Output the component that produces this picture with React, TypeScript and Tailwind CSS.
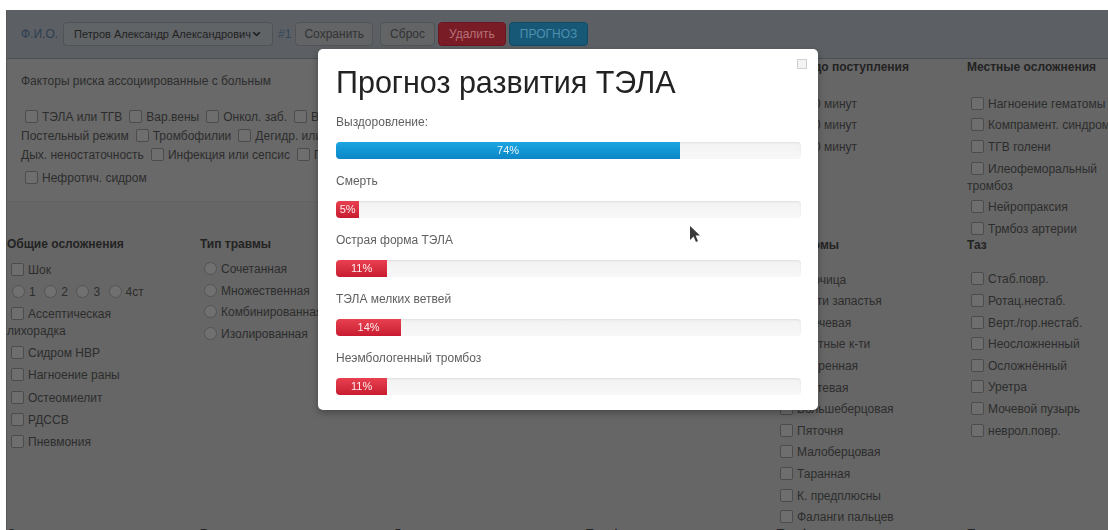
import { ChevronDown } from 'lucide-react';

type Bar = { label: string; value: number; tone: 'info' | 'danger' };

const PROGNOZ: Bar[] = [
  { label: 'Выздоровление:', value: 74, tone: 'info' },
  { label: 'Смерть', value: 5, tone: 'danger' },
  { label: 'Острая форма ТЭЛА', value: 11, tone: 'danger' },
  { label: 'ТЭЛА мелких ветвей', value: 14, tone: 'danger' },
  { label: 'Неэмбологенный тромбоз', value: 11, tone: 'danger' },
];

const OBSHIE = ['Сидром НВР', 'Нагноение раны', 'Остеомиелит', 'РДССВ', 'Пневмония'];
const TIP_TRAVMY = ['Сочетанная', 'Множественная', 'Комбинированная', 'Изолированная'];
const MEHANIZM = ['ДТП', 'Падение с высоты', 'Бытовая', 'Спортивная'];
const LOKALIZ = ['Верхняя конечность', 'Нижняя конечность', 'Позвоночник'];
const VREMYA = ['< 30 минут', '< 60 минут', '> 60 минут'];
const PERELOMY = [
  'Ключица', 'Кости запастья', 'Плечевая', 'Пястные к-ти', 'Бедренная', 'Локтевая',
  'Большеберцовая', 'Пяточня', 'Малоберцовая', 'Таранная', 'К. предплюсны', 'Фаланги пальцев',
];
const MESTNYE = ['Нагноение гематомы', 'Компрамент. синдром', 'ТГВ голени', 'Илеофеморальный тромбоз', 'Нейропраксия', 'Трмбоз артерии'];
const TAZ = ['Стаб.повр.', 'Ротац.нестаб.', 'Верт./гор.нестаб.', 'Неосложненный', 'Осложнённый', 'Уретра', 'Мочевой пузырь', 'неврол.повр.'];

function Box() {
  return <span className="inline-block w-[13px] h-[13px] ml-[4px] mr-[4px] align-[-2px] rounded-[2px] border border-[#4c4c4c] bg-[#6e6e6e]" />;
}

function Dot() {
  return <span className="inline-block w-[13px] h-[13px] ml-[4px] mr-[4px] align-[-2px] rounded-full border border-[#555555] bg-[#707070]" />;
}

function Check({ label, radio, tall }: { label: string; radio?: boolean; tall?: boolean }) {
  return (
    <div className={`${tall ? 'py-[2.6px]' : 'py-[2.3px]'} leading-[17px]`}>
      {radio ? <Dot /> : <Box />}{label}
    </div>
  );
}

function Heading({ children, className = '' }: { children: React.ReactNode; className?: string }) {
  return <h5 className={`font-bold text-[12px] leading-[17px] text-[#232323] whitespace-nowrap ${className}`}>{children}</h5>;
}

function Factor({ label }: { label: string }) {
  return <span className="mr-[3px]"><Box />{label}</span>;
}

export default function App() {
  return (
    <div className="relative h-screen overflow-hidden bg-white pt-[10px] pl-[6px] font-['Liberation_Sans',Arial,sans-serif] text-[12px] text-[#2d2d2d]">
      <div className="min-h-full w-[1160px] bg-[#666666] border-l border-[#555555]">
        {/* Шапка с пациентом и кнопками */}
        <div className="h-[49px] flex items-center pl-[14px] bg-[#5c6064] border-b border-[#4b4f53]">
          <span className="text-[#2e3d52]">Ф.И.О.</span>
          <div className="ml-[5px] w-[210px] h-[24px] flex items-center justify-between pl-[10px] pr-[10px] rounded-[4px] border border-[#4f5356] bg-[#606467] text-[11px] text-[#222222] whitespace-nowrap">
            <span>Петров Александр Александрович</span>
            <ChevronDown size={12} strokeWidth={3.5} />
          </div>
          <span className="ml-[5px] text-[#34465a]">#1</span>
          <button className="ml-[4px] h-[24px] px-[8px] rounded-[4px] border border-[#515355] bg-[#626466] text-[#333333]">Сохранить</button>
          <button className="ml-[7px] h-[24px] px-[9px] rounded-[4px] border border-[#515355] bg-[#626466] text-[#333333]">Сброс</button>
          <button className="ml-[3px] h-[24px] px-[10px] rounded-[4px] border border-[#6a1820] bg-[#7a1c25] text-[#b57279]">Удалить</button>
          <button className="ml-[3px] h-[24px] px-[10px] rounded-[4px] border border-[#124a66] bg-[#175877] text-[#4d90b0]">ПРОГНОЗ</button>
        </div>

        <div className="flex">
          <div className="w-[769px]">
            {/* Факторы риска */}
            <div className="pl-[14px] pt-[14px] pb-[13.5px] bg-[#696969] border-b border-[#636363]">
              <p className="leading-[17px] mb-[17.5px]">Факторы риска ассоциированные с больным</p>
              <div className="h-[19px] leading-[19px] whitespace-nowrap">
                <Factor label="ТЭЛА или ТГВ" /><Factor label="Вар.вены" /><Factor label="Онкол. заб." />
                <Factor label="Возраст > 60" /><Factor label="Ожирение" /><Factor label="Беременность" /><Box />
              </div>
              <div className="h-[19px] leading-[19px] whitespace-nowrap">
                <span className="mr-[3px]">Постельный режим</span><Factor label="Тромбофилии" />
                <Factor label="Дегидр. или анемия" /><Factor label="Сердечная недостаточность" /><Box />
              </div>
              <div className="h-[19px] leading-[19px] whitespace-nowrap">
                <span className="mr-[3px]">Дых. неностаточность</span><Factor label="Инфекция или сепсис" />
                <Factor label="Гормональная терапия" /><Box />
              </div>
              <div className="mt-[3px] h-[20px] leading-[20px] whitespace-nowrap">
                <Factor label="Нефротич. сидром" />
              </div>
            </div>

            <div className="grid grid-cols-[193px_193px_193px_190px] pt-[34px]">
              <div className="w-[155px]">
                <Heading className="mb-[6px]">Общие осложнения</Heading>
                <Check label="Шок" tall />
                <div className="py-[2.6px] pl-[1px] leading-[17px] whitespace-nowrap">
                  {['1', '2', '3', '4ст'].map(s => (
                    <span key={s} className="mr-[4.5px]"><Dot />{s}</span>
                  ))}
                </div>
                <Check label="Ассептическая лихорадка" tall />
                {OBSHIE.map(o => <Check key={o} label={o} tall />)}
              </div>
              <div className="w-[155px]">
                <Heading className="mb-[6px]">Тип травмы</Heading>
                {TIP_TRAVMY.map(t => <Check key={t} label={t} radio />)}
              </div>
              <div className="w-[155px]">
                <Heading className="mb-[6px]">Механизм травмы</Heading>
                {MEHANIZM.map(t => <Check key={t} label={t} radio />)}
              </div>
              <div className="w-[155px]">
                <Heading className="mb-[6px]">Локализация</Heading>
                {LOKALIZ.map(t => <Check key={t} label={t} />)}
              </div>
            </div>
          </div>

          <div className="w-[191px] whitespace-nowrap">
            <Heading className="-ml-[4px] mb-[17.5px]">Время до поступления</Heading>
            {VREMYA.map(v => <Check key={v} label={v} radio />)}
            <Heading className="mt-[79px] mb-[15px]">Переломы</Heading>
            {PERELOMY.map(p => <Check key={p} label={p} />)}
          </div>

          <div className="w-[155px]">
            <Heading className="mb-[17.5px]">Местные осложнения</Heading>
            {MESTNYE.map(m => <Check key={m} label={m} />)}
            <Heading className="-mt-[3px] mb-[15px]">Таз</Heading>
            {TAZ.map(t => <Check key={t} label={t} />)}
          </div>
        </div>

        <div className="grid grid-cols-[193px_193px_193px_190px_191px_160px] -mt-[2px]">
          <Heading>Сопутствующие</Heading>
          <Heading>Вид операции</Heading>
          <Heading>Доступ</Heading>
          <Heading>Тип фиксации</Heading>
          <Heading>Профилактика</Heading>
          <Heading>Прочее</Heading>
        </div>
      </div>

      {/* Модальное окно прогноза */}
      <div className="fixed left-[318px] top-[49px] w-[500px] pl-[18px] pr-[17px] pt-[13px] pb-[15px] rounded-[5px] bg-white shadow-[0_3px_7px_rgba(0,0,0,0.3)]">
        <span className="absolute top-[10px] right-[11px] w-[10px] h-[10px] border border-[#d0d0d0] bg-[#f3f3f3]" />
        <h3 className="text-[30.5px] leading-[40px] text-[#222222] mb-[10px]">Прогноз развития ТЭЛА</h3>
        {PROGNOZ.map((b, i) => (
          <div key={b.label}>
            <p className="leading-[20px] mb-[10px] text-[#5f5f5f]">{b.label}</p>
            <div className={`h-[17px] overflow-hidden rounded-[4px] bg-linear-to-b from-[#f2f2f2] to-[#f8f8f8] shadow-[inset_0_1px_2px_rgba(0,0,0,0.08)] ${i < PROGNOZ.length - 1 ? 'mb-[12px]' : ''}`}>
              <div
                className={`h-full text-center text-[11px] leading-[17px] text-white/90 ${b.tone === 'info' ? 'bg-linear-to-b from-[#1ba6e2] to-[#0a86c6]' : 'bg-linear-to-b from-[#e8404f] to-[#c81a31]'}`}
                style={{ width: `${b.value}%` }}
              >
                {b.value}%
              </div>
            </div>
          </div>
        ))}
        {/* курсор мыши */}
        <svg className="absolute left-[372px] top-[177px]" width="11" height="17" viewBox="0 0 11 17">
          <path d="M0 0 L0 14 L3.5 10.5 L6 16 L8 15 L5.6 9.6 L10 9.6 Z" fill="#3a3a3a" />
        </svg>
      </div>
    </div>
  );
}
